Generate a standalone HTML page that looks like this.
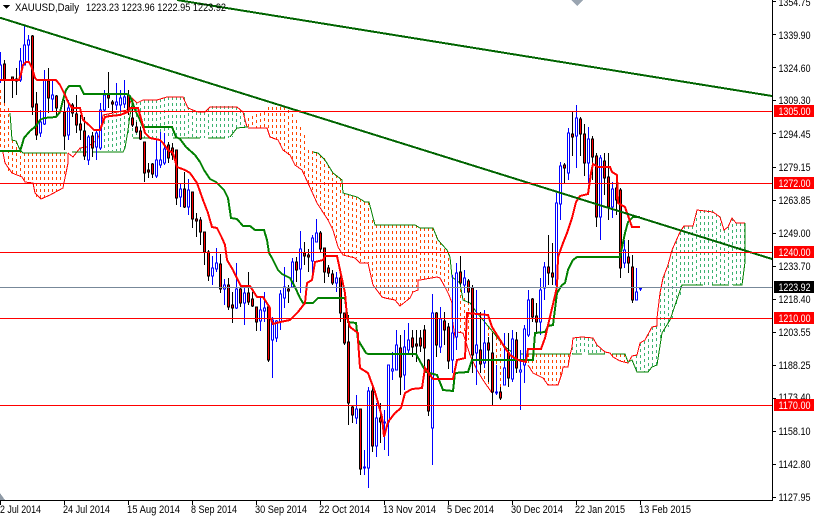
<!DOCTYPE html>
<html><head><meta charset="utf-8"><title>XAUUSD,Daily</title>
<style>
html,body{margin:0;padding:0;background:#fff;width:814px;height:516px;overflow:hidden}
svg{display:block;font-family:"Liberation Sans",sans-serif;font-size:11px}
.c{fill:none;stroke-width:1;stroke-dasharray:3 3}
.l{fill:none;stroke-width:1}
.t{fill:#000}
.w{fill:#fff}
</style></head><body>
<svg width="814" height="516" viewBox="0 0 814 516" shape-rendering="crispEdges" xmlns="http://www.w3.org/2000/svg">
<rect width="814" height="516" fill="#fff"/>
<!-- orange cloud columns -->
<path class="c" stroke="#ff4500" d="M0.5 90V150M4.5 85V150M8.5 108V173M12.5 140V175M16.5 141V177M20.5 150V177M24.5 153V182M28.5 153V183M32.5 153V183M36.5 153V197M40.5 153V199M44.5 153V197M48.5 153V195M52.5 153V193M56.5 153V191M60.5 153V188M64.5 153V175
M248.5 118V128M252.5 116V128M256.5 114V128M260.5 113V128M264.5 112V128M268.5 107V130M272.5 107V138M276.5 107V139M280.5 107V145M284.5 107V152M288.5 110V155M292.5 114V160M296.5 120V165M300.5 127V168M304.5 135V175M308.5 150V183M312.5 151V190M316.5 153V200M320.5 155V207M324.5 158V214M328.5 165V220M332.5 172V228M336.5 175V240M340.5 178V250M344.5 193V255M348.5 195V256M352.5 196V257M356.5 197V258M360.5 199V263M364.5 202V263M368.5 202V263M372.5 220V281M376.5 225V290M380.5 225V295M384.5 225V298M388.5 225V299M392.5 225V300M396.5 225V301M400.5 225V306M404.5 225V303M408.5 225V300M412.5 225V293M416.5 225V290M420.5 228V280M424.5 228V279M428.5 228V278M432.5 228V277M436.5 235V277M440.5 242V278M444.5 249V285M448.5 252V294M452.5 277V315M456.5 283V332M460.5 283V333M464.5 298V333M468.5 302V340M472.5 306V360M476.5 312V368M480.5 316V375M484.5 322V382M488.5 327V388M492.5 332V393M496.5 337V390M500.5 342V388M504.5 346V382M508.5 350V375M512.5 353V368M516.5 355V365
M528.5 354V365M532.5 354V372M536.5 354V375M540.5 354V377M544.5 354V380M548.5 354V385M552.5 354V385M556.5 354V385M560.5 354V375M564.5 354V367M568.5 354V365
M612.5 354V356M616.5 354V358M620.5 354V361M624.5 354V362"/>
<!-- green cloud columns -->
<path class="c" stroke="#3cb371" d="M80.5 148V152M84.5 147V152M88.5 147V152M92.5 144V152M96.5 140V151M100.5 135V150M104.5 115V150M108.5 114V151M112.5 114V151M116.5 113V151M120.5 112V151M124.5 110V151M128.5 112V135M132.5 98V138M136.5 102V138M140.5 102V138M144.5 100V138M148.5 100V138M152.5 100V138M156.5 100V138M160.5 99V138M164.5 98V138M168.5 97V138M172.5 97V138M176.5 97V138M180.5 97V138M184.5 97V138M188.5 107V138M192.5 110V138M196.5 112V138M200.5 112V138M204.5 112V138M208.5 108V138M212.5 106V138M216.5 106V138M220.5 106V138M224.5 106V138M228.5 106V138M232.5 106V137M236.5 107V129M240.5 110V128M244.5 113V128
M572.5 347V354M576.5 338V354M580.5 337V354M584.5 337V354M588.5 338V354M592.5 338V354M596.5 344V354M600.5 349V354M604.5 352V354
M636.5 355V371M640.5 343V372M644.5 341V372M648.5 333V372M652.5 327V367M656.5 326V365M660.5 293V345M664.5 275V332M668.5 265V327M672.5 250V318M676.5 241V307M680.5 232V296M684.5 226V285M688.5 226V285M692.5 226V285M696.5 212V285M700.5 210V285M704.5 210V285M708.5 210V285M712.5 210V285M716.5 214V285M720.5 217V285M724.5 230V285M728.5 227V285M732.5 218V285M736.5 223V285M740.5 223V285M744.5 223V262"/>
<!-- senkou A (thin red) -->
<path class="l" stroke="#ff0000" d="M2.5 150L5 163L12 173L22 177L25 182L33 183L35 193L41 199L50 195L63 188L68 163L68 153
M68 153L73 157L80 148L87 147L97 140L100 133L103 115L113 113L127 110L132 98L137 103L143 100L157 100L167 97L183 97L188 108L198 112L205 112L210 107L225 107L237 107L243 112L247 127
M248 128L267 128L270 137L278 140L283 150L290 155L295 165L302 170L308 183L317 203L328 220L333 230L338 247L343 255L355 258L360 263L368 263L373 285L382 297L385 298L395 300L400 306L405 302L410 298L413 292L418 290L418 280L420 280L437 277L440 278L445 287L449 295L452 303L452 317L455 337L457 332L463 333L470 355L477 370L483 380L492 393
M528 365L533 373L543 378L548 385L558 385L562 373L563 367L568 367L570 355L572 347L573 338L582 337L593 338L597 345L605 352L610 353L613 357L620 361L628 363L632 356L637 355L640 343L645 340L652 327L657 326L657 318L660 293L663 278L668 265L672 250L680 232L684 226L693 226L697 210L713 212L720 217L724 230L728 227L732 218L736 223L745 223"/>
<!-- senkou B (thin green) -->
<path class="l" stroke="#008000" d="M10 113L12 140L16 141L20 150L23 153H67M72 152H88M92 152H123L125 148L128 130L130 115L133 100M133 138H150M173 138H200M208 138H225M230 137L237 128L248 127
M313 152L318 153L325 160L333 173L342 180L343 193L357 197L365 202L369 202L375 225H415L420 228H433L438 240L447 250L450 257L452 277L460 283L463 300L470 303L477 313L483 320L493 332L503 345L513 353M520 354H570M572 354H582M588 354H605M612 354H625L628 362L632 360L637 372H648L652 367L657 365L662 333L670 320L682 285H703M712 285H729M733 285H742L745 262L745 223"/>
<!-- wicks black -->
<path class="l" stroke="#000" d="M4.5 60V103M12.5 77V98M16.5 68V95M32.5 35V115M36.5 92V140M48.5 68V113M56.5 95V117M64.5 100V150M72.5 103V117M76.5 95V133M80.5 115V140M84.5 117V160M92.5 132V157M108.5 72V108M112.5 100V113M128.5 90V115M132.5 108V127M136.5 122V133M140.5 127V140M144.5 142V182M148.5 163V178M152.5 163V178M168.5 142V163M172.5 143V160M176.5 150V205M184.5 172V208M192.5 192V228M196.5 213V237M200.5 217V245M204.5 232V265M208.5 250V281M220.5 254V293M228.5 278V310M232.5 292V323M240.5 285V307M248.5 272V305M252.5 292V307M256.5 307V331M268.5 305V362M288.5 285V303M296.5 257V282M304.5 242V265M308.5 249V272M320.5 231V252M324.5 248V283M328.5 265V277M332.5 270V285M340.5 274V322M344.5 313V345M348.5 315V425M352.5 405V423M360.5 409V475M372.5 387V452M380.5 403V443M400.5 335V395M412.5 330V357M416.5 330V362M420.5 330V352M424.5 325V375M428.5 359V416M436.5 312V357M444.5 312V345M448.5 323V369M460.5 256V285M468.5 279V303M472.5 285V373M480.5 312V373M488.5 337V382M492.5 333V405M500.5 387V400M508.5 333V387M516.5 332V373M532.5 298V322M536.5 303V332M548.5 235V285M552.5 243V285M564.5 163V183M572.5 112V156M580.5 117V156M584.5 124V176M592.5 136V180M596.5 153V227M604.5 153V195M608.5 153V220M616.5 180V215M620.5 188V278M628.5 240V273M632.5 255V303"/>
<!-- wicks blue -->
<path class="l" stroke="#0000ff" d="M0.5 52V83M20.5 48V82M24.5 25V65M28.5 35V63M40.5 110V137M44.5 70V125M52.5 80V112M68.5 100V140M88.5 135V165M96.5 130V160M100.5 103V150M104.5 90V111M116.5 83V110M120.5 90V112M124.5 80V108M156.5 140V178M160.5 132V168M164.5 133V165M180.5 183V207M188.5 179V215M212.5 256V285M216.5 248V272M224.5 279V305M236.5 263V309M244.5 287V325M260.5 298V331M264.5 292V322M272.5 317V378M276.5 320V342M280.5 290V330M284.5 267V308M292.5 258V288M300.5 231V293M312.5 235V273M316.5 219V240M336.5 272V292M356.5 395V424M364.5 450V475M368.5 387V488M376.5 403V457M384.5 410V450M388.5 365V456M392.5 352V380M396.5 330V370M404.5 330V390M408.5 323V353M432.5 294V465M440.5 307V353M452.5 275V373M456.5 263V350M464.5 270V293M476.5 290V385M484.5 310V368M496.5 365V395M504.5 333V385M512.5 330V382M520.5 350V410M524.5 325V383M528.5 290V337M540.5 278V335M544.5 262V300M556.5 193V290M560.5 162V220M568.5 128V180M576.5 105V168M588.5 127V183M600.5 155V240M612.5 182V218M624.5 240V268M636.5 268V300M640.5 287V291"/>
<!-- bear bodies -->
<path fill="#ff0000" stroke="#000" d="M3.5 64h2V80h-2zM11.5 77h2V80h-2zM15.5 79h2V81h-2zM31.5 36h2V107h-2zM35.5 104h2V135h-2zM47.5 81h2V98h-2zM55.5 96h2V108h-2zM63.5 112h2V136h-2zM71.5 105h2V113h-2zM75.5 114h2V125h-2zM79.5 124h2V130h-2zM83.5 131h2V156h-2zM91.5 136h2V148h-2zM107.5 95h2V98h-2zM111.5 102h2V104h-2zM127.5 95h2V110h-2zM131.5 118h2V125h-2zM135.5 127h2V132h-2zM139.5 131h2V139h-2zM143.5 142h2V173h-2zM147.5 170h2V172h-2zM151.5 164h2V174h-2zM167.5 145h2V158h-2zM171.5 148h2V155h-2zM175.5 150h2V198h-2zM183.5 189h2V207h-2zM191.5 192h2V219h-2zM195.5 219h2V221h-2zM199.5 220h2V232h-2zM203.5 232h2V252h-2zM207.5 252h2V276h-2zM219.5 264h2V289h-2zM227.5 285h2V307h-2zM231.5 305h2V308h-2zM239.5 289h2V303h-2zM247.5 293h2V302h-2zM251.5 299h2V306h-2zM255.5 307h2V322h-2zM267.5 307h2V360h-2zM287.5 289h2V291h-2zM295.5 262h2V270h-2zM303.5 253h2V256h-2zM307.5 255h2V257h-2zM319.5 233h2V249h-2zM323.5 248h2V272h-2zM327.5 268h2V273h-2zM331.5 274h2V283h-2zM339.5 278h2V313h-2zM343.5 313h2V343h-2zM347.5 342h2V403h-2zM351.5 407h2V415h-2zM359.5 409h2V469h-2zM371.5 391h2V446h-2zM379.5 418h2V422h-2zM399.5 348h2V377h-2zM411.5 338h2V347h-2zM415.5 344h2V346h-2zM419.5 338h2V346h-2zM423.5 330h2V348h-2zM427.5 360h2V411h-2zM435.5 313h2V345h-2zM443.5 321h2V330h-2zM447.5 327h2V361h-2zM459.5 272h2V283h-2zM467.5 281h2V292h-2zM471.5 288h2V355h-2zM479.5 350h2V364h-2zM487.5 343h2V350h-2zM491.5 353h2V392h-2zM499.5 392h2V398h-2zM507.5 353h2V378h-2zM515.5 340h2V368h-2zM531.5 299h2V317h-2zM535.5 316h2V322h-2zM547.5 267h2V273h-2zM551.5 273h2V277h-2zM563.5 165h2V168h-2zM571.5 134h2V137h-2zM579.5 119h2V134h-2zM583.5 134h2V163h-2zM591.5 139h2V157h-2zM595.5 156h2V217h-2zM603.5 161h2V178h-2zM607.5 177h2V207h-2zM615.5 188h2V200h-2zM619.5 190h2V268h-2zM627.5 257h2V263h-2zM631.5 267h2V300h-2z"/>
<!-- bull bodies -->
<path fill="#fff" stroke="#0000ff" d="M-0.5 65h2V80h-2zM19.5 61h2V80h-2zM23.5 45h2V65h-2zM27.5 40h2V45h-2zM39.5 122h2V133h-2zM43.5 80h2V124h-2zM51.5 95h2V99h-2zM67.5 108h2V135h-2zM87.5 137h2V160h-2zM95.5 133h2V147h-2zM99.5 110h2V148h-2zM103.5 95h2V110h-2zM115.5 102h2V105h-2zM119.5 98h2V105h-2zM123.5 97h2V104h-2zM155.5 160h2V176h-2zM159.5 160h2V165h-2zM163.5 149h2V163h-2zM179.5 189h2V197h-2zM187.5 190h2V207h-2zM211.5 268h2V276h-2zM215.5 263h2V269h-2zM223.5 285h2V289h-2zM235.5 289h2V308h-2zM243.5 293h2V303h-2zM259.5 310h2V321h-2zM263.5 308h2V311h-2zM271.5 320h2V340h-2zM275.5 321h2V338h-2zM279.5 294h2V322h-2zM283.5 287h2V298h-2zM291.5 262h2V287h-2zM299.5 249h2V269h-2zM311.5 238h2V261h-2zM315.5 233h2V242h-2zM335.5 278h2V283h-2zM355.5 409h2V418h-2zM363.5 467h2V468h-2zM367.5 391h2V468h-2zM375.5 418h2V446h-2zM383.5 422h2V423h-2zM387.5 365h2V422h-2zM391.5 369h2V371h-2zM395.5 345h2V370h-2zM403.5 347h2V375h-2zM407.5 340h2V350h-2zM431.5 313h2V428h-2zM439.5 319h2V347h-2zM451.5 333h2V360h-2zM455.5 273h2V337h-2zM463.5 278h2V285h-2zM475.5 345h2V353h-2zM483.5 343h2V363h-2zM495.5 392h2V393h-2zM503.5 368h2V385h-2zM511.5 339h2V379h-2zM519.5 370h2V372h-2zM523.5 329h2V365h-2zM527.5 300h2V335h-2zM539.5 290h2V322h-2zM543.5 267h2V288h-2zM555.5 203h2V285h-2zM559.5 166h2V204h-2zM567.5 133h2V173h-2zM575.5 118h2V136h-2zM587.5 139h2V163h-2zM599.5 158h2V217h-2zM611.5 189h2V207h-2zM623.5 250h2V263h-2zM635.5 292h2V300h-2zM639.5 288h2V289h-2z"/>
<!-- kijun -->
<path fill="none" stroke="#008000" stroke-width="2" d="M0 151H20L22 145L24 138L30 131L36 126L40 120L44 118L56 117L60 112L63 100L66 90L69 86H80L84 94H127L130 96L133 104L135 110L140 120L143 127H172L176 137L180 139L186 147L195 155L200 162L204 170L210 179L216 182L224 190L228 198L231 218L237 219L243 226H250L255 230H264L267 240L269 253L272 258L278 270L282 274L290 278L295 287L300 298L303 303H313L318 298H345L348 322L356 323L358 340L366 353L368 354H416L426 372L437 375L443 390L453 391L455 373L468 372L472 360H533L535 333L545 332L548 326L553 325L557 293L562 285L565 283L568 270L573 260L577 257H620L625 233L628 222L633 217H640"/>
<!-- tenkan -->
<path fill="none" stroke="#ff0000" stroke-width="2" d="M0 80H19L21 74L23 65L26 62H29L32 68L35 78L37 80H56L60 85L65 95L68 102L72 108H80L83 120L89 125L94 130H100L105 117L110 116L120 115L128 112L130 108H138L142 122L145 133L150 138L160 140L163 143L168 150L173 153L177 167L185 170L190 173L197 183L203 200L208 213L212 227L217 228L222 238L225 245L227 260L233 270L241 286H250L257 297H263L270 308V317L273 324L280 322L290 320L298 312L305 303L307 283L312 280L315 262L323 260L325 256H337L345 293L347 317L350 327L358 333V340L360 368L368 373L375 392L382 417L384 437L388 422L395 413L401 408L405 393L412 389L422 388L425 368L433 379H453L457 360L465 358L467 313L488 315L492 327L502 343L505 348L510 355L518 360L526 362L528 349H541L545 338L557 287L558 257L563 243L567 233L572 218L576 202L580 196L588 194L591 173L593 164L598 167H610L612 172L617 175L618 203L625 207L632 227H640"/>
<!-- trend lines -->
<path fill="none" stroke="#006400" stroke-width="2" d="M177 0L772 96M0 17.7L772 259"/>
<!-- horizontal lines -->
<path class="l" stroke="#ff0000" d="M0 111.5H772M0 183.5H772M0 252.5H772M0 318.5H772M0 405.5H772"/>
<path class="l" stroke="#778899" d="M0 287.5H772"/>
<!-- markers -->
<polygon points="571,0 583,0 577,6" fill="#9aa5b1"/>
<polygon points="0,493 5,500 0,500" fill="#8f9aa6"/>
<!-- header -->
<polygon points="3,5 10,5 6.5,9" fill="#000"/>
<text class="t" x="15" y="11" textLength="64" lengthAdjust="spacingAndGlyphs">XAUUSD,Daily</text>
<text class="t" x="86" y="11" textLength="140" lengthAdjust="spacingAndGlyphs">1223.23 1223.96 1222.95 1223.92</text>
<!-- axes -->
<path class="l" stroke="#000" d="M772.5 0V501M0 500.5H773M773 1.5H776M773 34.5H776M773 67.5H776M773 100.5H776M773 133.5H776M773 167.5H776M773 200.5H776M773 233.5H776M773 266.5H776M773 299.5H776M773 332.5H776M773 365.5H776M773 398.5H776M773 431.5H776M773 464.5H776M773 497.5H776M0.5 501V505M64.5 501V505M128.5 501V505M192.5 501V505M256.5 501V505M320.5 501V505M384.5 501V505M448.5 501V505M512.5 501V505M576.5 501V505M640.5 501V505"/>
<g class="t">
<text x="778.5" y="6" textLength="32" lengthAdjust="spacingAndGlyphs">1354.75</text>
<text x="778.5" y="39" textLength="32" lengthAdjust="spacingAndGlyphs">1339.90</text>
<text x="778.5" y="72" textLength="32" lengthAdjust="spacingAndGlyphs">1324.60</text>
<text x="778.5" y="104" textLength="32" lengthAdjust="spacingAndGlyphs">1309.30</text>
<text x="778.5" y="138" textLength="32" lengthAdjust="spacingAndGlyphs">1294.45</text>
<text x="778.5" y="171" textLength="32" lengthAdjust="spacingAndGlyphs">1279.15</text>
<text x="778.5" y="204" textLength="32" lengthAdjust="spacingAndGlyphs">1263.85</text>
<text x="778.5" y="237" textLength="32" lengthAdjust="spacingAndGlyphs">1249.00</text>
<text x="778.5" y="270" textLength="32" lengthAdjust="spacingAndGlyphs">1233.70</text>
<text x="778.5" y="303" textLength="32" lengthAdjust="spacingAndGlyphs">1218.40</text>
<text x="778.5" y="336" textLength="32" lengthAdjust="spacingAndGlyphs">1203.55</text>
<text x="778.5" y="369" textLength="32" lengthAdjust="spacingAndGlyphs">1188.25</text>
<text x="778.5" y="401" textLength="32" lengthAdjust="spacingAndGlyphs">1173.40</text>
<text x="778.5" y="435" textLength="32" lengthAdjust="spacingAndGlyphs">1158.10</text>
<text x="778.5" y="468" textLength="32" lengthAdjust="spacingAndGlyphs">1142.80</text>
<text x="778.5" y="501" textLength="32" lengthAdjust="spacingAndGlyphs">1127.95</text>
</g>
<!-- price boxes -->
<rect x="774" y="105" width="40" height="12" fill="#ff0000"/>
<rect x="774" y="177" width="40" height="12" fill="#ff0000"/>
<rect x="774" y="246" width="40" height="12" fill="#ff0000"/>
<rect x="774" y="312" width="40" height="12" fill="#ff0000"/>
<rect x="774" y="399" width="40" height="12" fill="#ff0000"/>
<rect x="774" y="281" width="40" height="12" fill="#000"/>
<g class="w">
<text x="778.5" y="115" textLength="32" lengthAdjust="spacingAndGlyphs">1305.00</text>
<text x="778.5" y="187" textLength="32" lengthAdjust="spacingAndGlyphs">1272.00</text>
<text x="778.5" y="256" textLength="32" lengthAdjust="spacingAndGlyphs">1240.00</text>
<text x="778.5" y="322" textLength="32" lengthAdjust="spacingAndGlyphs">1210.00</text>
<text x="778.5" y="409" textLength="32" lengthAdjust="spacingAndGlyphs">1170.00</text>
<text x="778.5" y="291" textLength="32" lengthAdjust="spacingAndGlyphs">1223.92</text>
</g>
<!-- date labels -->
<g class="t">
<text x="0" y="513" textLength="41" lengthAdjust="spacingAndGlyphs">2 Jul 2014</text>
<text x="63" y="513" textLength="47" lengthAdjust="spacingAndGlyphs">24 Jul 2014</text>
<text x="127" y="513" textLength="53" lengthAdjust="spacingAndGlyphs">15 Aug 2014</text>
<text x="191" y="513" textLength="46" lengthAdjust="spacingAndGlyphs">8 Sep 2014</text>
<text x="255" y="513" textLength="52" lengthAdjust="spacingAndGlyphs">30 Sep 2014</text>
<text x="319" y="513" textLength="51" lengthAdjust="spacingAndGlyphs">22 Oct 2014</text>
<text x="383" y="513" textLength="53" lengthAdjust="spacingAndGlyphs">13 Nov 2014</text>
<text x="447" y="513" textLength="47" lengthAdjust="spacingAndGlyphs">5 Dec 2014</text>
<text x="511" y="513" textLength="52" lengthAdjust="spacingAndGlyphs">30 Dec 2014</text>
<text x="575" y="513" textLength="50" lengthAdjust="spacingAndGlyphs">22 Jan 2015</text>
<text x="639" y="513" textLength="52" lengthAdjust="spacingAndGlyphs">13 Feb 2015</text>
</g>
</svg>
</body></html>
